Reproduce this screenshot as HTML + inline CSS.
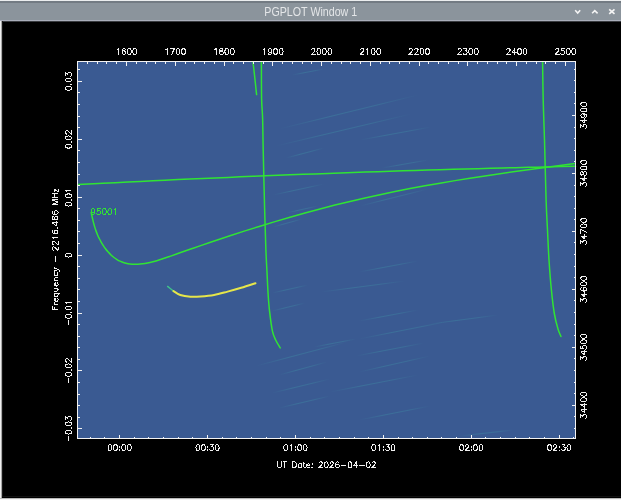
<!DOCTYPE html>
<html><head><meta charset="utf-8"><style>
html,body{margin:0;padding:0;background:#000;width:621px;height:500px;overflow:hidden}
svg{display:block;will-change:transform}
text{font-family:"Liberation Sans",sans-serif}
</style></head><body>
<svg width="621" height="500" viewBox="0 0 621 500" shape-rendering="auto">
<rect x="0" y="0" width="621" height="500" fill="#000"/>
<rect x="0" y="0" width="621" height="1" fill="#eceeef"/>
<rect x="0" y="1" width="621" height="2" fill="#737b83"/>
<rect x="0" y="3" width="621" height="17" fill="#8b949c"/>
<rect x="0" y="20" width="621" height="1" fill="#aaaebb"/>
<rect x="0" y="21" width="621" height="1" fill="#3a3c40"/>
<rect x="2" y="21" width="1" height="476" fill="#161616"/>
<rect x="0" y="496" width="621" height="1" fill="#121212"/>
<rect x="1" y="21" width="1" height="479" fill="#a8a8a8"/>
<rect x="0" y="21" width="1" height="479" fill="#f0f0f0"/>
<rect x="0" y="498" width="621" height="1" fill="#b8b8b8"/>
<rect x="0" y="499" width="621" height="1" fill="#f4f4f4"/>
<text x="310.8" y="15.8" text-anchor="middle" font-size="12" fill="#e4e6e8" transform="translate(310.8 0) scale(0.89 1) translate(-310.8 0)">PGPLOT Window 1</text>
<path d="M575.2 10.3 L577.7 13.1 L580.2 10.3" fill="none" stroke="#f4f4f4" stroke-width="1.6"/>
<path d="M592.1 13.3 L594.8 10.6 L597.6 13.3" fill="none" stroke="#f4f4f4" stroke-width="1.6"/>
<path d="M609.2 9.3 L614.5 13.8 M614.5 9.3 L609.2 13.8" fill="none" stroke="#f4f4f4" stroke-width="1.7"/>
<rect x="77" y="61" width="499" height="378" fill="#3a5a92"/>
<defs><linearGradient id="sg" x1="0" y1="0" x2="1" y2="0"><stop offset="0" stop-color="#3f98a8" stop-opacity="0"/><stop offset="0.35" stop-color="#3f98a8" stop-opacity="0.34"/><stop offset="0.7" stop-color="#3f98a8" stop-opacity="0.3"/><stop offset="1" stop-color="#3f98a8" stop-opacity="0"/></linearGradient></defs>
<line x1="279" y1="129" x2="418" y2="95" stroke="url(#sg)" stroke-width="1.1"/>
<line x1="276" y1="146" x2="411" y2="114" stroke="url(#sg)" stroke-width="1.1"/>
<line x1="360" y1="140" x2="431" y2="127" stroke="url(#sg)" stroke-width="1.1"/>
<line x1="286" y1="158" x2="324" y2="148" stroke="url(#sg)" stroke-width="1.1"/>
<line x1="292" y1="75" x2="324" y2="69" stroke="url(#sg)" stroke-width="1.1"/>
<line x1="273" y1="195" x2="324" y2="184" stroke="url(#sg)" stroke-width="1.1"/>
<line x1="273" y1="227" x2="302" y2="219" stroke="url(#sg)" stroke-width="1.1"/>
<line x1="360" y1="206" x2="428" y2="189" stroke="url(#sg)" stroke-width="1.1"/>
<line x1="382" y1="168" x2="428" y2="160" stroke="url(#sg)" stroke-width="1.1"/>
<line x1="286" y1="213" x2="318" y2="206" stroke="url(#sg)" stroke-width="1.1"/>
<line x1="272" y1="293" x2="308" y2="285" stroke="url(#sg)" stroke-width="1.1"/>
<line x1="272" y1="311" x2="305" y2="303" stroke="url(#sg)" stroke-width="1.1"/>
<line x1="359" y1="272" x2="418" y2="261" stroke="url(#sg)" stroke-width="1.1"/>
<line x1="321" y1="292" x2="405" y2="281" stroke="url(#sg)" stroke-width="1.1"/>
<line x1="359" y1="321" x2="418" y2="310" stroke="url(#sg)" stroke-width="1.1"/>
<line x1="359" y1="339" x2="450" y2="321" stroke="url(#sg)" stroke-width="1.1"/>
<line x1="314" y1="347" x2="356" y2="339" stroke="url(#sg)" stroke-width="1.1"/>
<line x1="256" y1="366" x2="347" y2="342" stroke="url(#sg)" stroke-width="1.1"/>
<line x1="279" y1="375" x2="327" y2="362" stroke="url(#sg)" stroke-width="1.1"/>
<line x1="356" y1="356" x2="424" y2="343" stroke="url(#sg)" stroke-width="1.1"/>
<line x1="359" y1="372" x2="430" y2="356" stroke="url(#sg)" stroke-width="1.1"/>
<line x1="272" y1="393" x2="330" y2="379" stroke="url(#sg)" stroke-width="1.1"/>
<line x1="330" y1="392" x2="418" y2="375" stroke="url(#sg)" stroke-width="1.1"/>
<line x1="279" y1="408" x2="330" y2="396" stroke="url(#sg)" stroke-width="1.1"/>
<line x1="359" y1="420" x2="430" y2="406" stroke="url(#sg)" stroke-width="1.1"/>
<line x1="430" y1="324" x2="498" y2="315" stroke="url(#sg)" stroke-width="1.1"/>
<line x1="460" y1="436" x2="513" y2="430" stroke="url(#sg)" stroke-width="1.1"/>
<path d="M78.00 184.55 C82.17 184.33 94.67 183.68 103.00 183.25 C111.33 182.83 119.67 182.41 128.00 182.00 C136.33 181.59 144.67 181.19 153.00 180.79 C161.33 180.39 169.67 180.00 178.00 179.62 C186.33 179.23 194.67 178.85 203.00 178.48 C211.33 178.11 219.67 177.75 228.00 177.39 C236.33 177.03 244.67 176.68 253.00 176.33 C261.33 175.99 269.67 175.65 278.00 175.32 C286.33 174.99 294.67 174.66 303.00 174.35 C311.33 174.03 319.67 173.72 328.00 173.41 C336.33 173.10 344.67 172.81 353.00 172.51 C361.33 172.22 369.67 171.94 378.00 171.66 C386.33 171.38 394.67 171.11 403.00 170.84 C411.33 170.58 419.67 170.32 428.00 170.07 C436.33 169.81 444.67 169.57 453.00 169.33 C461.33 169.09 469.67 168.86 478.00 168.63 C486.33 168.41 494.67 168.19 503.00 167.97 C511.33 167.76 519.67 167.56 528.00 167.36 C536.33 167.16 545.08 166.96 553.00 166.78 C560.92 166.60 571.75 166.37 575.50 166.29" fill="none" stroke="#30e433" stroke-width="1.5" stroke-linejoin="round" stroke-linecap="round" />
<path d="M91.20 212.40 C91.33 213.05 91.70 214.91 92.00 216.28 C92.30 217.65 92.67 219.27 93.00 220.63 C93.33 222.00 93.67 223.27 94.00 224.48 C94.33 225.69 94.67 226.81 95.00 227.88 C95.33 228.94 95.58 229.73 96.00 230.88 C96.42 232.02 97.00 233.56 97.50 234.75 C98.00 235.94 98.42 236.86 99.00 238.03 C99.58 239.20 100.33 240.60 101.00 241.78 C101.67 242.96 102.25 243.94 103.00 245.10 C103.75 246.26 104.67 247.61 105.50 248.73 C106.33 249.86 107.08 250.81 108.00 251.85 C108.92 252.89 110.00 254.02 111.00 254.97 C112.00 255.91 113.00 256.74 114.00 257.50 C115.00 258.27 116.00 258.94 117.00 259.54 C118.00 260.15 118.83 260.63 120.00 261.16 C121.17 261.68 122.67 262.29 124.00 262.71 C125.33 263.12 126.67 263.43 128.00 263.67 C129.33 263.91 130.67 264.05 132.00 264.14 C133.33 264.23 134.67 264.25 136.00 264.23 C137.33 264.21 138.50 264.16 140.00 264.02 C141.50 263.88 143.33 263.66 145.00 263.40 C146.67 263.13 148.17 262.85 150.00 262.43 C151.83 262.02 154.00 261.47 156.00 260.91 C158.00 260.35 159.67 259.84 162.00 259.08 C164.33 258.33 167.00 257.40 170.00 256.36 C173.00 255.31 176.67 253.99 180.00 252.81 C183.33 251.64 186.67 250.47 190.00 249.30 C193.33 248.14 195.83 247.27 200.00 245.84 C204.17 244.41 210.00 242.42 215.00 240.74 C220.00 239.06 225.00 237.39 230.00 235.75 C235.00 234.11 240.00 232.49 245.00 230.90 C250.00 229.31 255.00 227.73 260.00 226.19 C265.00 224.64 270.00 223.12 275.00 221.62 C280.00 220.13 285.00 218.66 290.00 217.22 C295.00 215.78 300.00 214.37 305.00 212.98 C310.00 211.60 315.00 210.25 320.00 208.93 C325.00 207.61 330.00 206.32 335.00 205.07 C340.00 203.82 345.00 202.59 350.00 201.41 C355.00 200.22 360.00 199.07 365.00 197.94 C370.00 196.82 375.00 195.72 380.00 194.66 C385.00 193.59 390.00 192.56 395.00 191.55 C400.00 190.54 405.00 189.56 410.00 188.61 C415.00 187.65 420.00 186.72 425.00 185.81 C430.00 184.90 435.00 184.02 440.00 183.15 C445.00 182.29 450.00 181.45 455.00 180.62 C460.00 179.80 465.00 179.00 470.00 178.21 C475.00 177.42 480.00 176.65 485.00 175.90 C490.00 175.14 495.00 174.41 500.00 173.68 C505.00 172.95 510.00 172.24 515.00 171.54 C520.00 170.84 525.00 170.16 530.00 169.48 C535.00 168.80 540.00 168.13 545.00 167.47 C550.00 166.80 555.00 166.15 560.00 165.50 C565.00 164.86 572.50 163.90 575.00 163.58" fill="none" stroke="#30e433" stroke-width="1.5" stroke-linejoin="round" stroke-linecap="round" />
<path d="M253.00 62.00 C253.25 64.17 253.90 69.57 254.50 75.00 C255.10 80.43 256.25 91.33 256.60 94.60" fill="none" stroke="#30e433" stroke-width="1.5" stroke-linejoin="round" stroke-linecap="round" />
<path d="M261.40 62.00 C261.43 68.13 261.40 89.47 261.60 98.80 C261.80 108.13 262.33 109.47 262.60 118.00 C262.87 126.53 262.85 134.33 263.20 150.00 C263.55 165.67 264.25 195.33 264.70 212.00 C265.15 228.67 265.52 240.00 265.90 250.00 C266.28 260.00 266.63 264.67 267.00 272.00 C267.37 279.33 267.67 287.40 268.10 294.00 C268.53 300.60 268.87 305.37 269.60 311.60 C270.33 317.83 271.47 326.63 272.50 331.40 C273.53 336.17 274.52 337.45 275.80 340.20 C277.08 342.95 279.47 346.62 280.20 347.90" fill="none" stroke="#30e433" stroke-width="1.5" stroke-linejoin="round" stroke-linecap="round" />
<path d="M542.60 62.00 C542.70 68.33 542.88 87.00 543.20 100.00 C543.52 113.00 544.02 123.33 544.50 140.00 C544.98 156.67 545.60 185.00 546.10 200.00 C546.60 215.00 547.02 220.00 547.50 230.00 C547.98 240.00 548.35 250.00 549.00 260.00 C549.65 270.00 550.50 281.00 551.40 290.00 C552.30 299.00 553.30 307.50 554.40 314.00 C555.50 320.50 556.90 325.25 558.00 329.00 C559.10 332.75 560.50 335.25 561.00 336.50" fill="none" stroke="#30e433" stroke-width="1.5" stroke-linejoin="round" stroke-linecap="round" />
<path d="M167.60 286.40 C168.58 287.18 172.52 290.32 173.50 291.10" fill="none" stroke="#3fc48a" stroke-width="1.4" stroke-linejoin="round" stroke-linecap="round" />
<path d="M173.50 291.10 C174.63 291.75 177.48 294.07 180.30 295.00 C183.12 295.93 187.02 296.45 190.40 296.70 C193.78 296.95 196.65 296.78 200.60 296.50 C204.55 296.22 209.60 295.82 214.10 295.00 C218.60 294.18 223.08 292.80 227.60 291.60 C232.12 290.40 236.55 289.20 241.20 287.80 C245.85 286.40 253.12 283.97 255.50 283.20" fill="none" stroke="#e6e64a" stroke-width="2.0" stroke-linejoin="round" stroke-linecap="round" />
<path transform="translate(90.50 214.50) translate(0.00 0)" d="M4.42 -3.86 L4.14 -3.04 L3.59 -2.48 L2.76 -2.21 L2.48 -2.21 L1.66 -2.48 L1.10 -3.04 L0.83 -3.86 L0.83 -4.14 L1.10 -4.97 L1.66 -5.52 L2.48 -5.80 L2.76 -5.80 L3.59 -5.52 L4.14 -4.97 L4.42 -3.86 L4.42 -2.48 L4.14 -1.10 L3.59 -0.28 L2.76 0.00 L2.21 0.00 L1.38 -0.28 L1.10 -0.83 M9.66 -5.80 L6.90 -5.80 L6.62 -3.31 L6.90 -3.59 L7.73 -3.86 L8.56 -3.86 L9.38 -3.59 L9.94 -3.04 L10.21 -2.21 L10.21 -1.66 L9.94 -0.83 L9.38 -0.28 L8.56 0.00 L7.73 0.00 L6.90 -0.28 L6.62 -0.55 L6.35 -1.10 M13.52 -5.80 L12.70 -5.52 L12.14 -4.69 L11.87 -3.31 L11.87 -2.48 L12.14 -1.10 L12.70 -0.28 L13.52 0.00 L14.08 0.00 L14.90 -0.28 L15.46 -1.10 L15.73 -2.48 L15.73 -3.31 L15.46 -4.69 L14.90 -5.52 L14.08 -5.80 L13.52 -5.80 M19.04 -5.80 L18.22 -5.52 L17.66 -4.69 L17.39 -3.31 L17.39 -2.48 L17.66 -1.10 L18.22 -0.28 L19.04 0.00 L19.60 0.00 L20.42 -0.28 L20.98 -1.10 L21.25 -2.48 L21.25 -3.31 L20.98 -4.69 L20.42 -5.52 L19.60 -5.80 L19.04 -5.80 M23.74 -4.69 L24.29 -4.97 L25.12 -5.80 L25.12 0.00" fill="none" stroke="#30e433" stroke-width="1.0" stroke-linecap="round" stroke-linejoin="round" shape-rendering="crispEdges"/>
<rect x="77.5" y="61.5" width="498" height="377" fill="none" stroke="#f2f2f2" stroke-width="1"/>
<path transform="translate(126.50 54.40) translate(-11.04 0)" d="M1.66 -4.69 L2.21 -4.97 L3.04 -5.80 L3.04 0.00 M9.94 -4.97 L9.66 -5.52 L8.83 -5.80 L8.28 -5.80 L7.45 -5.52 L6.90 -4.69 L6.62 -3.31 L6.62 -1.93 L6.90 -0.83 L7.45 -0.28 L8.28 0.00 L8.56 0.00 L9.38 -0.28 L9.94 -0.83 L10.21 -1.66 L10.21 -1.93 L9.94 -2.76 L9.38 -3.31 L8.56 -3.59 L8.28 -3.59 L7.45 -3.31 L6.90 -2.76 L6.62 -1.93 M13.52 -5.80 L12.70 -5.52 L12.14 -4.69 L11.87 -3.31 L11.87 -2.48 L12.14 -1.10 L12.70 -0.28 L13.52 0.00 L14.08 0.00 L14.90 -0.28 L15.46 -1.10 L15.73 -2.48 L15.73 -3.31 L15.46 -4.69 L14.90 -5.52 L14.08 -5.80 L13.52 -5.80 M19.04 -5.80 L18.22 -5.52 L17.66 -4.69 L17.39 -3.31 L17.39 -2.48 L17.66 -1.10 L18.22 -0.28 L19.04 0.00 L19.60 0.00 L20.42 -0.28 L20.98 -1.10 L21.25 -2.48 L21.25 -3.31 L20.98 -4.69 L20.42 -5.52 L19.60 -5.80 L19.04 -5.80" fill="none" stroke="#f0f0f0" stroke-width="1.0" stroke-linecap="round" stroke-linejoin="round" shape-rendering="crispEdges"/>
<path transform="translate(175.28 54.40) translate(-11.04 0)" d="M1.66 -4.69 L2.21 -4.97 L3.04 -5.80 L3.04 0.00 M10.21 -5.80 L7.45 0.00 M6.35 -5.80 L10.21 -5.80 M13.52 -5.80 L12.70 -5.52 L12.14 -4.69 L11.87 -3.31 L11.87 -2.48 L12.14 -1.10 L12.70 -0.28 L13.52 0.00 L14.08 0.00 L14.90 -0.28 L15.46 -1.10 L15.73 -2.48 L15.73 -3.31 L15.46 -4.69 L14.90 -5.52 L14.08 -5.80 L13.52 -5.80 M19.04 -5.80 L18.22 -5.52 L17.66 -4.69 L17.39 -3.31 L17.39 -2.48 L17.66 -1.10 L18.22 -0.28 L19.04 0.00 L19.60 0.00 L20.42 -0.28 L20.98 -1.10 L21.25 -2.48 L21.25 -3.31 L20.98 -4.69 L20.42 -5.52 L19.60 -5.80 L19.04 -5.80" fill="none" stroke="#f0f0f0" stroke-width="1.0" stroke-linecap="round" stroke-linejoin="round" shape-rendering="crispEdges"/>
<path transform="translate(224.06 54.40) translate(-11.04 0)" d="M1.66 -4.69 L2.21 -4.97 L3.04 -5.80 L3.04 0.00 M7.73 -5.80 L6.90 -5.52 L6.62 -4.97 L6.62 -4.42 L6.90 -3.86 L7.45 -3.59 L8.56 -3.31 L9.38 -3.04 L9.94 -2.48 L10.21 -1.93 L10.21 -1.10 L9.94 -0.55 L9.66 -0.28 L8.83 0.00 L7.73 0.00 L6.90 -0.28 L6.62 -0.55 L6.35 -1.10 L6.35 -1.93 L6.62 -2.48 L7.18 -3.04 L8.00 -3.31 L9.11 -3.59 L9.66 -3.86 L9.94 -4.42 L9.94 -4.97 L9.66 -5.52 L8.83 -5.80 L7.73 -5.80 M13.52 -5.80 L12.70 -5.52 L12.14 -4.69 L11.87 -3.31 L11.87 -2.48 L12.14 -1.10 L12.70 -0.28 L13.52 0.00 L14.08 0.00 L14.90 -0.28 L15.46 -1.10 L15.73 -2.48 L15.73 -3.31 L15.46 -4.69 L14.90 -5.52 L14.08 -5.80 L13.52 -5.80 M19.04 -5.80 L18.22 -5.52 L17.66 -4.69 L17.39 -3.31 L17.39 -2.48 L17.66 -1.10 L18.22 -0.28 L19.04 0.00 L19.60 0.00 L20.42 -0.28 L20.98 -1.10 L21.25 -2.48 L21.25 -3.31 L20.98 -4.69 L20.42 -5.52 L19.60 -5.80 L19.04 -5.80" fill="none" stroke="#f0f0f0" stroke-width="1.0" stroke-linecap="round" stroke-linejoin="round" shape-rendering="crispEdges"/>
<path transform="translate(272.83 54.40) translate(-11.04 0)" d="M1.66 -4.69 L2.21 -4.97 L3.04 -5.80 L3.04 0.00 M9.94 -3.86 L9.66 -3.04 L9.11 -2.48 L8.28 -2.21 L8.00 -2.21 L7.18 -2.48 L6.62 -3.04 L6.35 -3.86 L6.35 -4.14 L6.62 -4.97 L7.18 -5.52 L8.00 -5.80 L8.28 -5.80 L9.11 -5.52 L9.66 -4.97 L9.94 -3.86 L9.94 -2.48 L9.66 -1.10 L9.11 -0.28 L8.28 0.00 L7.73 0.00 L6.90 -0.28 L6.62 -0.83 M13.52 -5.80 L12.70 -5.52 L12.14 -4.69 L11.87 -3.31 L11.87 -2.48 L12.14 -1.10 L12.70 -0.28 L13.52 0.00 L14.08 0.00 L14.90 -0.28 L15.46 -1.10 L15.73 -2.48 L15.73 -3.31 L15.46 -4.69 L14.90 -5.52 L14.08 -5.80 L13.52 -5.80 M19.04 -5.80 L18.22 -5.52 L17.66 -4.69 L17.39 -3.31 L17.39 -2.48 L17.66 -1.10 L18.22 -0.28 L19.04 0.00 L19.60 0.00 L20.42 -0.28 L20.98 -1.10 L21.25 -2.48 L21.25 -3.31 L20.98 -4.69 L20.42 -5.52 L19.60 -5.80 L19.04 -5.80" fill="none" stroke="#f0f0f0" stroke-width="1.0" stroke-linecap="round" stroke-linejoin="round" shape-rendering="crispEdges"/>
<path transform="translate(321.61 54.40) translate(-11.04 0)" d="M1.10 -4.42 L1.10 -4.69 L1.38 -5.24 L1.66 -5.52 L2.21 -5.80 L3.31 -5.80 L3.86 -5.52 L4.14 -5.24 L4.42 -4.69 L4.42 -4.14 L4.14 -3.59 L3.59 -2.76 L0.83 0.00 L4.69 0.00 M8.00 -5.80 L7.18 -5.52 L6.62 -4.69 L6.35 -3.31 L6.35 -2.48 L6.62 -1.10 L7.18 -0.28 L8.00 0.00 L8.56 0.00 L9.38 -0.28 L9.94 -1.10 L10.21 -2.48 L10.21 -3.31 L9.94 -4.69 L9.38 -5.52 L8.56 -5.80 L8.00 -5.80 M13.52 -5.80 L12.70 -5.52 L12.14 -4.69 L11.87 -3.31 L11.87 -2.48 L12.14 -1.10 L12.70 -0.28 L13.52 0.00 L14.08 0.00 L14.90 -0.28 L15.46 -1.10 L15.73 -2.48 L15.73 -3.31 L15.46 -4.69 L14.90 -5.52 L14.08 -5.80 L13.52 -5.80 M19.04 -5.80 L18.22 -5.52 L17.66 -4.69 L17.39 -3.31 L17.39 -2.48 L17.66 -1.10 L18.22 -0.28 L19.04 0.00 L19.60 0.00 L20.42 -0.28 L20.98 -1.10 L21.25 -2.48 L21.25 -3.31 L20.98 -4.69 L20.42 -5.52 L19.60 -5.80 L19.04 -5.80" fill="none" stroke="#f0f0f0" stroke-width="1.0" stroke-linecap="round" stroke-linejoin="round" shape-rendering="crispEdges"/>
<path transform="translate(370.39 54.40) translate(-11.04 0)" d="M1.10 -4.42 L1.10 -4.69 L1.38 -5.24 L1.66 -5.52 L2.21 -5.80 L3.31 -5.80 L3.86 -5.52 L4.14 -5.24 L4.42 -4.69 L4.42 -4.14 L4.14 -3.59 L3.59 -2.76 L0.83 0.00 L4.69 0.00 M7.18 -4.69 L7.73 -4.97 L8.56 -5.80 L8.56 0.00 M13.52 -5.80 L12.70 -5.52 L12.14 -4.69 L11.87 -3.31 L11.87 -2.48 L12.14 -1.10 L12.70 -0.28 L13.52 0.00 L14.08 0.00 L14.90 -0.28 L15.46 -1.10 L15.73 -2.48 L15.73 -3.31 L15.46 -4.69 L14.90 -5.52 L14.08 -5.80 L13.52 -5.80 M19.04 -5.80 L18.22 -5.52 L17.66 -4.69 L17.39 -3.31 L17.39 -2.48 L17.66 -1.10 L18.22 -0.28 L19.04 0.00 L19.60 0.00 L20.42 -0.28 L20.98 -1.10 L21.25 -2.48 L21.25 -3.31 L20.98 -4.69 L20.42 -5.52 L19.60 -5.80 L19.04 -5.80" fill="none" stroke="#f0f0f0" stroke-width="1.0" stroke-linecap="round" stroke-linejoin="round" shape-rendering="crispEdges"/>
<path transform="translate(419.17 54.40) translate(-11.04 0)" d="M1.10 -4.42 L1.10 -4.69 L1.38 -5.24 L1.66 -5.52 L2.21 -5.80 L3.31 -5.80 L3.86 -5.52 L4.14 -5.24 L4.42 -4.69 L4.42 -4.14 L4.14 -3.59 L3.59 -2.76 L0.83 0.00 L4.69 0.00 M6.62 -4.42 L6.62 -4.69 L6.90 -5.24 L7.18 -5.52 L7.73 -5.80 L8.83 -5.80 L9.38 -5.52 L9.66 -5.24 L9.94 -4.69 L9.94 -4.14 L9.66 -3.59 L9.11 -2.76 L6.35 0.00 L10.21 0.00 M13.52 -5.80 L12.70 -5.52 L12.14 -4.69 L11.87 -3.31 L11.87 -2.48 L12.14 -1.10 L12.70 -0.28 L13.52 0.00 L14.08 0.00 L14.90 -0.28 L15.46 -1.10 L15.73 -2.48 L15.73 -3.31 L15.46 -4.69 L14.90 -5.52 L14.08 -5.80 L13.52 -5.80 M19.04 -5.80 L18.22 -5.52 L17.66 -4.69 L17.39 -3.31 L17.39 -2.48 L17.66 -1.10 L18.22 -0.28 L19.04 0.00 L19.60 0.00 L20.42 -0.28 L20.98 -1.10 L21.25 -2.48 L21.25 -3.31 L20.98 -4.69 L20.42 -5.52 L19.60 -5.80 L19.04 -5.80" fill="none" stroke="#f0f0f0" stroke-width="1.0" stroke-linecap="round" stroke-linejoin="round" shape-rendering="crispEdges"/>
<path transform="translate(467.95 54.40) translate(-11.04 0)" d="M1.10 -4.42 L1.10 -4.69 L1.38 -5.24 L1.66 -5.52 L2.21 -5.80 L3.31 -5.80 L3.86 -5.52 L4.14 -5.24 L4.42 -4.69 L4.42 -4.14 L4.14 -3.59 L3.59 -2.76 L0.83 0.00 L4.69 0.00 M6.90 -5.80 L9.94 -5.80 L8.28 -3.59 L9.11 -3.59 L9.66 -3.31 L9.94 -3.04 L10.21 -2.21 L10.21 -1.66 L9.94 -0.83 L9.38 -0.28 L8.56 0.00 L7.73 0.00 L6.90 -0.28 L6.62 -0.55 L6.35 -1.10 M13.52 -5.80 L12.70 -5.52 L12.14 -4.69 L11.87 -3.31 L11.87 -2.48 L12.14 -1.10 L12.70 -0.28 L13.52 0.00 L14.08 0.00 L14.90 -0.28 L15.46 -1.10 L15.73 -2.48 L15.73 -3.31 L15.46 -4.69 L14.90 -5.52 L14.08 -5.80 L13.52 -5.80 M19.04 -5.80 L18.22 -5.52 L17.66 -4.69 L17.39 -3.31 L17.39 -2.48 L17.66 -1.10 L18.22 -0.28 L19.04 0.00 L19.60 0.00 L20.42 -0.28 L20.98 -1.10 L21.25 -2.48 L21.25 -3.31 L20.98 -4.69 L20.42 -5.52 L19.60 -5.80 L19.04 -5.80" fill="none" stroke="#f0f0f0" stroke-width="1.0" stroke-linecap="round" stroke-linejoin="round" shape-rendering="crispEdges"/>
<path transform="translate(516.72 54.40) translate(-11.04 0)" d="M1.10 -4.42 L1.10 -4.69 L1.38 -5.24 L1.66 -5.52 L2.21 -5.80 L3.31 -5.80 L3.86 -5.52 L4.14 -5.24 L4.42 -4.69 L4.42 -4.14 L4.14 -3.59 L3.59 -2.76 L0.83 0.00 L4.69 0.00 M9.11 -5.80 L6.35 -1.93 L10.49 -1.93 M9.11 -5.80 L9.11 0.00 M13.52 -5.80 L12.70 -5.52 L12.14 -4.69 L11.87 -3.31 L11.87 -2.48 L12.14 -1.10 L12.70 -0.28 L13.52 0.00 L14.08 0.00 L14.90 -0.28 L15.46 -1.10 L15.73 -2.48 L15.73 -3.31 L15.46 -4.69 L14.90 -5.52 L14.08 -5.80 L13.52 -5.80 M19.04 -5.80 L18.22 -5.52 L17.66 -4.69 L17.39 -3.31 L17.39 -2.48 L17.66 -1.10 L18.22 -0.28 L19.04 0.00 L19.60 0.00 L20.42 -0.28 L20.98 -1.10 L21.25 -2.48 L21.25 -3.31 L20.98 -4.69 L20.42 -5.52 L19.60 -5.80 L19.04 -5.80" fill="none" stroke="#f0f0f0" stroke-width="1.0" stroke-linecap="round" stroke-linejoin="round" shape-rendering="crispEdges"/>
<path transform="translate(565.50 54.40) translate(-11.04 0)" d="M1.10 -4.42 L1.10 -4.69 L1.38 -5.24 L1.66 -5.52 L2.21 -5.80 L3.31 -5.80 L3.86 -5.52 L4.14 -5.24 L4.42 -4.69 L4.42 -4.14 L4.14 -3.59 L3.59 -2.76 L0.83 0.00 L4.69 0.00 M9.66 -5.80 L6.90 -5.80 L6.62 -3.31 L6.90 -3.59 L7.73 -3.86 L8.56 -3.86 L9.38 -3.59 L9.94 -3.04 L10.21 -2.21 L10.21 -1.66 L9.94 -0.83 L9.38 -0.28 L8.56 0.00 L7.73 0.00 L6.90 -0.28 L6.62 -0.55 L6.35 -1.10 M13.52 -5.80 L12.70 -5.52 L12.14 -4.69 L11.87 -3.31 L11.87 -2.48 L12.14 -1.10 L12.70 -0.28 L13.52 0.00 L14.08 0.00 L14.90 -0.28 L15.46 -1.10 L15.73 -2.48 L15.73 -3.31 L15.46 -4.69 L14.90 -5.52 L14.08 -5.80 L13.52 -5.80 M19.04 -5.80 L18.22 -5.52 L17.66 -4.69 L17.39 -3.31 L17.39 -2.48 L17.66 -1.10 L18.22 -0.28 L19.04 0.00 L19.60 0.00 L20.42 -0.28 L20.98 -1.10 L21.25 -2.48 L21.25 -3.31 L20.98 -4.69 L20.42 -5.52 L19.60 -5.80 L19.04 -5.80" fill="none" stroke="#f0f0f0" stroke-width="1.0" stroke-linecap="round" stroke-linejoin="round" shape-rendering="crispEdges"/>
<path transform="translate(119.60 450.50) translate(-12.42 0)" d="M2.48 -5.80 L1.66 -5.52 L1.10 -4.69 L0.83 -3.31 L0.83 -2.48 L1.10 -1.10 L1.66 -0.28 L2.48 0.00 L3.04 0.00 L3.86 -0.28 L4.42 -1.10 L4.69 -2.48 L4.69 -3.31 L4.42 -4.69 L3.86 -5.52 L3.04 -5.80 L2.48 -5.80 M8.00 -5.80 L7.18 -5.52 L6.62 -4.69 L6.35 -3.31 L6.35 -2.48 L6.62 -1.10 L7.18 -0.28 L8.00 0.00 L8.56 0.00 L9.38 -0.28 L9.94 -1.10 L10.21 -2.48 L10.21 -3.31 L9.94 -4.69 L9.38 -5.52 L8.56 -5.80 L8.00 -5.80 M12.42 -3.86 L12.14 -3.59 L12.42 -3.31 L12.70 -3.59 L12.42 -3.86 M12.42 -0.55 L12.14 -0.28 L12.42 0.00 L12.70 -0.28 L12.42 -0.55 M16.28 -5.80 L15.46 -5.52 L14.90 -4.69 L14.63 -3.31 L14.63 -2.48 L14.90 -1.10 L15.46 -0.28 L16.28 0.00 L16.84 0.00 L17.66 -0.28 L18.22 -1.10 L18.49 -2.48 L18.49 -3.31 L18.22 -4.69 L17.66 -5.52 L16.84 -5.80 L16.28 -5.80 M21.80 -5.80 L20.98 -5.52 L20.42 -4.69 L20.15 -3.31 L20.15 -2.48 L20.42 -1.10 L20.98 -0.28 L21.80 0.00 L22.36 0.00 L23.18 -0.28 L23.74 -1.10 L24.01 -2.48 L24.01 -3.31 L23.74 -4.69 L23.18 -5.52 L22.36 -5.80 L21.80 -5.80" fill="none" stroke="#f0f0f0" stroke-width="1.0" stroke-linecap="round" stroke-linejoin="round" shape-rendering="crispEdges"/>
<path transform="translate(207.52 450.50) translate(-12.42 0)" d="M2.48 -5.80 L1.66 -5.52 L1.10 -4.69 L0.83 -3.31 L0.83 -2.48 L1.10 -1.10 L1.66 -0.28 L2.48 0.00 L3.04 0.00 L3.86 -0.28 L4.42 -1.10 L4.69 -2.48 L4.69 -3.31 L4.42 -4.69 L3.86 -5.52 L3.04 -5.80 L2.48 -5.80 M8.00 -5.80 L7.18 -5.52 L6.62 -4.69 L6.35 -3.31 L6.35 -2.48 L6.62 -1.10 L7.18 -0.28 L8.00 0.00 L8.56 0.00 L9.38 -0.28 L9.94 -1.10 L10.21 -2.48 L10.21 -3.31 L9.94 -4.69 L9.38 -5.52 L8.56 -5.80 L8.00 -5.80 M12.42 -3.86 L12.14 -3.59 L12.42 -3.31 L12.70 -3.59 L12.42 -3.86 M12.42 -0.55 L12.14 -0.28 L12.42 0.00 L12.70 -0.28 L12.42 -0.55 M15.18 -5.80 L18.22 -5.80 L16.56 -3.59 L17.39 -3.59 L17.94 -3.31 L18.22 -3.04 L18.49 -2.21 L18.49 -1.66 L18.22 -0.83 L17.66 -0.28 L16.84 0.00 L16.01 0.00 L15.18 -0.28 L14.90 -0.55 L14.63 -1.10 M21.80 -5.80 L20.98 -5.52 L20.42 -4.69 L20.15 -3.31 L20.15 -2.48 L20.42 -1.10 L20.98 -0.28 L21.80 0.00 L22.36 0.00 L23.18 -0.28 L23.74 -1.10 L24.01 -2.48 L24.01 -3.31 L23.74 -4.69 L23.18 -5.52 L22.36 -5.80 L21.80 -5.80" fill="none" stroke="#f0f0f0" stroke-width="1.0" stroke-linecap="round" stroke-linejoin="round" shape-rendering="crispEdges"/>
<path transform="translate(295.44 450.50) translate(-12.42 0)" d="M2.48 -5.80 L1.66 -5.52 L1.10 -4.69 L0.83 -3.31 L0.83 -2.48 L1.10 -1.10 L1.66 -0.28 L2.48 0.00 L3.04 0.00 L3.86 -0.28 L4.42 -1.10 L4.69 -2.48 L4.69 -3.31 L4.42 -4.69 L3.86 -5.52 L3.04 -5.80 L2.48 -5.80 M7.18 -4.69 L7.73 -4.97 L8.56 -5.80 L8.56 0.00 M12.42 -3.86 L12.14 -3.59 L12.42 -3.31 L12.70 -3.59 L12.42 -3.86 M12.42 -0.55 L12.14 -0.28 L12.42 0.00 L12.70 -0.28 L12.42 -0.55 M16.28 -5.80 L15.46 -5.52 L14.90 -4.69 L14.63 -3.31 L14.63 -2.48 L14.90 -1.10 L15.46 -0.28 L16.28 0.00 L16.84 0.00 L17.66 -0.28 L18.22 -1.10 L18.49 -2.48 L18.49 -3.31 L18.22 -4.69 L17.66 -5.52 L16.84 -5.80 L16.28 -5.80 M21.80 -5.80 L20.98 -5.52 L20.42 -4.69 L20.15 -3.31 L20.15 -2.48 L20.42 -1.10 L20.98 -0.28 L21.80 0.00 L22.36 0.00 L23.18 -0.28 L23.74 -1.10 L24.01 -2.48 L24.01 -3.31 L23.74 -4.69 L23.18 -5.52 L22.36 -5.80 L21.80 -5.80" fill="none" stroke="#f0f0f0" stroke-width="1.0" stroke-linecap="round" stroke-linejoin="round" shape-rendering="crispEdges"/>
<path transform="translate(383.36 450.50) translate(-12.42 0)" d="M2.48 -5.80 L1.66 -5.52 L1.10 -4.69 L0.83 -3.31 L0.83 -2.48 L1.10 -1.10 L1.66 -0.28 L2.48 0.00 L3.04 0.00 L3.86 -0.28 L4.42 -1.10 L4.69 -2.48 L4.69 -3.31 L4.42 -4.69 L3.86 -5.52 L3.04 -5.80 L2.48 -5.80 M7.18 -4.69 L7.73 -4.97 L8.56 -5.80 L8.56 0.00 M12.42 -3.86 L12.14 -3.59 L12.42 -3.31 L12.70 -3.59 L12.42 -3.86 M12.42 -0.55 L12.14 -0.28 L12.42 0.00 L12.70 -0.28 L12.42 -0.55 M15.18 -5.80 L18.22 -5.80 L16.56 -3.59 L17.39 -3.59 L17.94 -3.31 L18.22 -3.04 L18.49 -2.21 L18.49 -1.66 L18.22 -0.83 L17.66 -0.28 L16.84 0.00 L16.01 0.00 L15.18 -0.28 L14.90 -0.55 L14.63 -1.10 M21.80 -5.80 L20.98 -5.52 L20.42 -4.69 L20.15 -3.31 L20.15 -2.48 L20.42 -1.10 L20.98 -0.28 L21.80 0.00 L22.36 0.00 L23.18 -0.28 L23.74 -1.10 L24.01 -2.48 L24.01 -3.31 L23.74 -4.69 L23.18 -5.52 L22.36 -5.80 L21.80 -5.80" fill="none" stroke="#f0f0f0" stroke-width="1.0" stroke-linecap="round" stroke-linejoin="round" shape-rendering="crispEdges"/>
<path transform="translate(471.28 450.50) translate(-12.42 0)" d="M2.48 -5.80 L1.66 -5.52 L1.10 -4.69 L0.83 -3.31 L0.83 -2.48 L1.10 -1.10 L1.66 -0.28 L2.48 0.00 L3.04 0.00 L3.86 -0.28 L4.42 -1.10 L4.69 -2.48 L4.69 -3.31 L4.42 -4.69 L3.86 -5.52 L3.04 -5.80 L2.48 -5.80 M6.62 -4.42 L6.62 -4.69 L6.90 -5.24 L7.18 -5.52 L7.73 -5.80 L8.83 -5.80 L9.38 -5.52 L9.66 -5.24 L9.94 -4.69 L9.94 -4.14 L9.66 -3.59 L9.11 -2.76 L6.35 0.00 L10.21 0.00 M12.42 -3.86 L12.14 -3.59 L12.42 -3.31 L12.70 -3.59 L12.42 -3.86 M12.42 -0.55 L12.14 -0.28 L12.42 0.00 L12.70 -0.28 L12.42 -0.55 M16.28 -5.80 L15.46 -5.52 L14.90 -4.69 L14.63 -3.31 L14.63 -2.48 L14.90 -1.10 L15.46 -0.28 L16.28 0.00 L16.84 0.00 L17.66 -0.28 L18.22 -1.10 L18.49 -2.48 L18.49 -3.31 L18.22 -4.69 L17.66 -5.52 L16.84 -5.80 L16.28 -5.80 M21.80 -5.80 L20.98 -5.52 L20.42 -4.69 L20.15 -3.31 L20.15 -2.48 L20.42 -1.10 L20.98 -0.28 L21.80 0.00 L22.36 0.00 L23.18 -0.28 L23.74 -1.10 L24.01 -2.48 L24.01 -3.31 L23.74 -4.69 L23.18 -5.52 L22.36 -5.80 L21.80 -5.80" fill="none" stroke="#f0f0f0" stroke-width="1.0" stroke-linecap="round" stroke-linejoin="round" shape-rendering="crispEdges"/>
<path transform="translate(559.20 450.50) translate(-12.42 0)" d="M2.48 -5.80 L1.66 -5.52 L1.10 -4.69 L0.83 -3.31 L0.83 -2.48 L1.10 -1.10 L1.66 -0.28 L2.48 0.00 L3.04 0.00 L3.86 -0.28 L4.42 -1.10 L4.69 -2.48 L4.69 -3.31 L4.42 -4.69 L3.86 -5.52 L3.04 -5.80 L2.48 -5.80 M6.62 -4.42 L6.62 -4.69 L6.90 -5.24 L7.18 -5.52 L7.73 -5.80 L8.83 -5.80 L9.38 -5.52 L9.66 -5.24 L9.94 -4.69 L9.94 -4.14 L9.66 -3.59 L9.11 -2.76 L6.35 0.00 L10.21 0.00 M12.42 -3.86 L12.14 -3.59 L12.42 -3.31 L12.70 -3.59 L12.42 -3.86 M12.42 -0.55 L12.14 -0.28 L12.42 0.00 L12.70 -0.28 L12.42 -0.55 M15.18 -5.80 L18.22 -5.80 L16.56 -3.59 L17.39 -3.59 L17.94 -3.31 L18.22 -3.04 L18.49 -2.21 L18.49 -1.66 L18.22 -0.83 L17.66 -0.28 L16.84 0.00 L16.01 0.00 L15.18 -0.28 L14.90 -0.55 L14.63 -1.10 M21.80 -5.80 L20.98 -5.52 L20.42 -4.69 L20.15 -3.31 L20.15 -2.48 L20.42 -1.10 L20.98 -0.28 L21.80 0.00 L22.36 0.00 L23.18 -0.28 L23.74 -1.10 L24.01 -2.48 L24.01 -3.31 L23.74 -4.69 L23.18 -5.52 L22.36 -5.80 L21.80 -5.80" fill="none" stroke="#f0f0f0" stroke-width="1.0" stroke-linecap="round" stroke-linejoin="round" shape-rendering="crispEdges"/>
<path transform="translate(71.40 428.80) rotate(-90) translate(-13.25 0)" d="M1.10 -2.48 L6.07 -2.48 M9.66 -5.80 L8.83 -5.52 L8.28 -4.69 L8.00 -3.31 L8.00 -2.48 L8.28 -1.10 L8.83 -0.28 L9.66 0.00 L10.21 0.00 L11.04 -0.28 L11.59 -1.10 L11.87 -2.48 L11.87 -3.31 L11.59 -4.69 L11.04 -5.52 L10.21 -5.80 L9.66 -5.80 M14.08 -0.55 L13.80 -0.28 L14.08 0.00 L14.35 -0.28 L14.08 -0.55 M17.94 -5.80 L17.11 -5.52 L16.56 -4.69 L16.28 -3.31 L16.28 -2.48 L16.56 -1.10 L17.11 -0.28 L17.94 0.00 L18.49 0.00 L19.32 -0.28 L19.87 -1.10 L20.15 -2.48 L20.15 -3.31 L19.87 -4.69 L19.32 -5.52 L18.49 -5.80 L17.94 -5.80 M22.36 -5.80 L25.39 -5.80 L23.74 -3.59 L24.56 -3.59 L25.12 -3.31 L25.39 -3.04 L25.67 -2.21 L25.67 -1.66 L25.39 -0.83 L24.84 -0.28 L24.01 0.00 L23.18 0.00 L22.36 -0.28 L22.08 -0.55 L21.80 -1.10" fill="none" stroke="#f0f0f0" stroke-width="1.0" stroke-linecap="round" stroke-linejoin="round" shape-rendering="crispEdges"/>
<path transform="translate(71.40 370.90) rotate(-90) translate(-13.25 0)" d="M1.10 -2.48 L6.07 -2.48 M9.66 -5.80 L8.83 -5.52 L8.28 -4.69 L8.00 -3.31 L8.00 -2.48 L8.28 -1.10 L8.83 -0.28 L9.66 0.00 L10.21 0.00 L11.04 -0.28 L11.59 -1.10 L11.87 -2.48 L11.87 -3.31 L11.59 -4.69 L11.04 -5.52 L10.21 -5.80 L9.66 -5.80 M14.08 -0.55 L13.80 -0.28 L14.08 0.00 L14.35 -0.28 L14.08 -0.55 M17.94 -5.80 L17.11 -5.52 L16.56 -4.69 L16.28 -3.31 L16.28 -2.48 L16.56 -1.10 L17.11 -0.28 L17.94 0.00 L18.49 0.00 L19.32 -0.28 L19.87 -1.10 L20.15 -2.48 L20.15 -3.31 L19.87 -4.69 L19.32 -5.52 L18.49 -5.80 L17.94 -5.80 M22.08 -4.42 L22.08 -4.69 L22.36 -5.24 L22.63 -5.52 L23.18 -5.80 L24.29 -5.80 L24.84 -5.52 L25.12 -5.24 L25.39 -4.69 L25.39 -4.14 L25.12 -3.59 L24.56 -2.76 L21.80 0.00 L25.67 0.00" fill="none" stroke="#f0f0f0" stroke-width="1.0" stroke-linecap="round" stroke-linejoin="round" shape-rendering="crispEdges"/>
<path transform="translate(71.40 313.00) rotate(-90) translate(-13.25 0)" d="M1.10 -2.48 L6.07 -2.48 M9.66 -5.80 L8.83 -5.52 L8.28 -4.69 L8.00 -3.31 L8.00 -2.48 L8.28 -1.10 L8.83 -0.28 L9.66 0.00 L10.21 0.00 L11.04 -0.28 L11.59 -1.10 L11.87 -2.48 L11.87 -3.31 L11.59 -4.69 L11.04 -5.52 L10.21 -5.80 L9.66 -5.80 M14.08 -0.55 L13.80 -0.28 L14.08 0.00 L14.35 -0.28 L14.08 -0.55 M17.94 -5.80 L17.11 -5.52 L16.56 -4.69 L16.28 -3.31 L16.28 -2.48 L16.56 -1.10 L17.11 -0.28 L17.94 0.00 L18.49 0.00 L19.32 -0.28 L19.87 -1.10 L20.15 -2.48 L20.15 -3.31 L19.87 -4.69 L19.32 -5.52 L18.49 -5.80 L17.94 -5.80 M22.63 -4.69 L23.18 -4.97 L24.01 -5.80 L24.01 0.00" fill="none" stroke="#f0f0f0" stroke-width="1.0" stroke-linecap="round" stroke-linejoin="round" shape-rendering="crispEdges"/>
<path transform="translate(71.40 255.10) rotate(-90) translate(-2.76 0)" d="M2.48 -5.80 L1.66 -5.52 L1.10 -4.69 L0.83 -3.31 L0.83 -2.48 L1.10 -1.10 L1.66 -0.28 L2.48 0.00 L3.04 0.00 L3.86 -0.28 L4.42 -1.10 L4.69 -2.48 L4.69 -3.31 L4.42 -4.69 L3.86 -5.52 L3.04 -5.80 L2.48 -5.80" fill="none" stroke="#f0f0f0" stroke-width="1.0" stroke-linecap="round" stroke-linejoin="round" shape-rendering="crispEdges"/>
<path transform="translate(71.40 197.20) rotate(-90) translate(-9.66 0)" d="M2.48 -5.80 L1.66 -5.52 L1.10 -4.69 L0.83 -3.31 L0.83 -2.48 L1.10 -1.10 L1.66 -0.28 L2.48 0.00 L3.04 0.00 L3.86 -0.28 L4.42 -1.10 L4.69 -2.48 L4.69 -3.31 L4.42 -4.69 L3.86 -5.52 L3.04 -5.80 L2.48 -5.80 M6.90 -0.55 L6.62 -0.28 L6.90 0.00 L7.18 -0.28 L6.90 -0.55 M10.76 -5.80 L9.94 -5.52 L9.38 -4.69 L9.11 -3.31 L9.11 -2.48 L9.38 -1.10 L9.94 -0.28 L10.76 0.00 L11.32 0.00 L12.14 -0.28 L12.70 -1.10 L12.97 -2.48 L12.97 -3.31 L12.70 -4.69 L12.14 -5.52 L11.32 -5.80 L10.76 -5.80 M15.46 -4.69 L16.01 -4.97 L16.84 -5.80 L16.84 0.00" fill="none" stroke="#f0f0f0" stroke-width="1.0" stroke-linecap="round" stroke-linejoin="round" shape-rendering="crispEdges"/>
<path transform="translate(71.40 139.30) rotate(-90) translate(-9.66 0)" d="M2.48 -5.80 L1.66 -5.52 L1.10 -4.69 L0.83 -3.31 L0.83 -2.48 L1.10 -1.10 L1.66 -0.28 L2.48 0.00 L3.04 0.00 L3.86 -0.28 L4.42 -1.10 L4.69 -2.48 L4.69 -3.31 L4.42 -4.69 L3.86 -5.52 L3.04 -5.80 L2.48 -5.80 M6.90 -0.55 L6.62 -0.28 L6.90 0.00 L7.18 -0.28 L6.90 -0.55 M10.76 -5.80 L9.94 -5.52 L9.38 -4.69 L9.11 -3.31 L9.11 -2.48 L9.38 -1.10 L9.94 -0.28 L10.76 0.00 L11.32 0.00 L12.14 -0.28 L12.70 -1.10 L12.97 -2.48 L12.97 -3.31 L12.70 -4.69 L12.14 -5.52 L11.32 -5.80 L10.76 -5.80 M14.90 -4.42 L14.90 -4.69 L15.18 -5.24 L15.46 -5.52 L16.01 -5.80 L17.11 -5.80 L17.66 -5.52 L17.94 -5.24 L18.22 -4.69 L18.22 -4.14 L17.94 -3.59 L17.39 -2.76 L14.63 0.00 L18.49 0.00" fill="none" stroke="#f0f0f0" stroke-width="1.0" stroke-linecap="round" stroke-linejoin="round" shape-rendering="crispEdges"/>
<path transform="translate(71.40 81.40) rotate(-90) translate(-9.66 0)" d="M2.48 -5.80 L1.66 -5.52 L1.10 -4.69 L0.83 -3.31 L0.83 -2.48 L1.10 -1.10 L1.66 -0.28 L2.48 0.00 L3.04 0.00 L3.86 -0.28 L4.42 -1.10 L4.69 -2.48 L4.69 -3.31 L4.42 -4.69 L3.86 -5.52 L3.04 -5.80 L2.48 -5.80 M6.90 -0.55 L6.62 -0.28 L6.90 0.00 L7.18 -0.28 L6.90 -0.55 M10.76 -5.80 L9.94 -5.52 L9.38 -4.69 L9.11 -3.31 L9.11 -2.48 L9.38 -1.10 L9.94 -0.28 L10.76 0.00 L11.32 0.00 L12.14 -0.28 L12.70 -1.10 L12.97 -2.48 L12.97 -3.31 L12.70 -4.69 L12.14 -5.52 L11.32 -5.80 L10.76 -5.80 M15.18 -5.80 L18.22 -5.80 L16.56 -3.59 L17.39 -3.59 L17.94 -3.31 L18.22 -3.04 L18.49 -2.21 L18.49 -1.66 L18.22 -0.83 L17.66 -0.28 L16.84 0.00 L16.01 0.00 L15.18 -0.28 L14.90 -0.55 L14.63 -1.10" fill="none" stroke="#f0f0f0" stroke-width="1.0" stroke-linecap="round" stroke-linejoin="round" shape-rendering="crispEdges"/>
<path transform="translate(586.60 405.25) rotate(-90) translate(-13.80 0)" d="M1.38 -5.80 L4.42 -5.80 L2.76 -3.59 L3.59 -3.59 L4.14 -3.31 L4.42 -3.04 L4.69 -2.21 L4.69 -1.66 L4.42 -0.83 L3.86 -0.28 L3.04 0.00 L2.21 0.00 L1.38 -0.28 L1.10 -0.55 L0.83 -1.10 M9.11 -5.80 L6.35 -1.93 L10.49 -1.93 M9.11 -5.80 L9.11 0.00 M14.63 -5.80 L11.87 -1.93 L16.01 -1.93 M14.63 -5.80 L14.63 0.00 M19.04 -5.80 L18.22 -5.52 L17.66 -4.69 L17.39 -3.31 L17.39 -2.48 L17.66 -1.10 L18.22 -0.28 L19.04 0.00 L19.60 0.00 L20.42 -0.28 L20.98 -1.10 L21.25 -2.48 L21.25 -3.31 L20.98 -4.69 L20.42 -5.52 L19.60 -5.80 L19.04 -5.80 M24.56 -5.80 L23.74 -5.52 L23.18 -4.69 L22.91 -3.31 L22.91 -2.48 L23.18 -1.10 L23.74 -0.28 L24.56 0.00 L25.12 0.00 L25.94 -0.28 L26.50 -1.10 L26.77 -2.48 L26.77 -3.31 L26.50 -4.69 L25.94 -5.52 L25.12 -5.80 L24.56 -5.80" fill="none" stroke="#f0f0f0" stroke-width="1.0" stroke-linecap="round" stroke-linejoin="round" shape-rendering="crispEdges"/>
<path transform="translate(586.60 347.30) rotate(-90) translate(-13.80 0)" d="M1.38 -5.80 L4.42 -5.80 L2.76 -3.59 L3.59 -3.59 L4.14 -3.31 L4.42 -3.04 L4.69 -2.21 L4.69 -1.66 L4.42 -0.83 L3.86 -0.28 L3.04 0.00 L2.21 0.00 L1.38 -0.28 L1.10 -0.55 L0.83 -1.10 M9.11 -5.80 L6.35 -1.93 L10.49 -1.93 M9.11 -5.80 L9.11 0.00 M15.18 -5.80 L12.42 -5.80 L12.14 -3.31 L12.42 -3.59 L13.25 -3.86 L14.08 -3.86 L14.90 -3.59 L15.46 -3.04 L15.73 -2.21 L15.73 -1.66 L15.46 -0.83 L14.90 -0.28 L14.08 0.00 L13.25 0.00 L12.42 -0.28 L12.14 -0.55 L11.87 -1.10 M19.04 -5.80 L18.22 -5.52 L17.66 -4.69 L17.39 -3.31 L17.39 -2.48 L17.66 -1.10 L18.22 -0.28 L19.04 0.00 L19.60 0.00 L20.42 -0.28 L20.98 -1.10 L21.25 -2.48 L21.25 -3.31 L20.98 -4.69 L20.42 -5.52 L19.60 -5.80 L19.04 -5.80 M24.56 -5.80 L23.74 -5.52 L23.18 -4.69 L22.91 -3.31 L22.91 -2.48 L23.18 -1.10 L23.74 -0.28 L24.56 0.00 L25.12 0.00 L25.94 -0.28 L26.50 -1.10 L26.77 -2.48 L26.77 -3.31 L26.50 -4.69 L25.94 -5.52 L25.12 -5.80 L24.56 -5.80" fill="none" stroke="#f0f0f0" stroke-width="1.0" stroke-linecap="round" stroke-linejoin="round" shape-rendering="crispEdges"/>
<path transform="translate(586.60 289.35) rotate(-90) translate(-13.80 0)" d="M1.38 -5.80 L4.42 -5.80 L2.76 -3.59 L3.59 -3.59 L4.14 -3.31 L4.42 -3.04 L4.69 -2.21 L4.69 -1.66 L4.42 -0.83 L3.86 -0.28 L3.04 0.00 L2.21 0.00 L1.38 -0.28 L1.10 -0.55 L0.83 -1.10 M9.11 -5.80 L6.35 -1.93 L10.49 -1.93 M9.11 -5.80 L9.11 0.00 M15.46 -4.97 L15.18 -5.52 L14.35 -5.80 L13.80 -5.80 L12.97 -5.52 L12.42 -4.69 L12.14 -3.31 L12.14 -1.93 L12.42 -0.83 L12.97 -0.28 L13.80 0.00 L14.08 0.00 L14.90 -0.28 L15.46 -0.83 L15.73 -1.66 L15.73 -1.93 L15.46 -2.76 L14.90 -3.31 L14.08 -3.59 L13.80 -3.59 L12.97 -3.31 L12.42 -2.76 L12.14 -1.93 M19.04 -5.80 L18.22 -5.52 L17.66 -4.69 L17.39 -3.31 L17.39 -2.48 L17.66 -1.10 L18.22 -0.28 L19.04 0.00 L19.60 0.00 L20.42 -0.28 L20.98 -1.10 L21.25 -2.48 L21.25 -3.31 L20.98 -4.69 L20.42 -5.52 L19.60 -5.80 L19.04 -5.80 M24.56 -5.80 L23.74 -5.52 L23.18 -4.69 L22.91 -3.31 L22.91 -2.48 L23.18 -1.10 L23.74 -0.28 L24.56 0.00 L25.12 0.00 L25.94 -0.28 L26.50 -1.10 L26.77 -2.48 L26.77 -3.31 L26.50 -4.69 L25.94 -5.52 L25.12 -5.80 L24.56 -5.80" fill="none" stroke="#f0f0f0" stroke-width="1.0" stroke-linecap="round" stroke-linejoin="round" shape-rendering="crispEdges"/>
<path transform="translate(586.60 231.40) rotate(-90) translate(-13.80 0)" d="M1.38 -5.80 L4.42 -5.80 L2.76 -3.59 L3.59 -3.59 L4.14 -3.31 L4.42 -3.04 L4.69 -2.21 L4.69 -1.66 L4.42 -0.83 L3.86 -0.28 L3.04 0.00 L2.21 0.00 L1.38 -0.28 L1.10 -0.55 L0.83 -1.10 M9.11 -5.80 L6.35 -1.93 L10.49 -1.93 M9.11 -5.80 L9.11 0.00 M15.73 -5.80 L12.97 0.00 M11.87 -5.80 L15.73 -5.80 M19.04 -5.80 L18.22 -5.52 L17.66 -4.69 L17.39 -3.31 L17.39 -2.48 L17.66 -1.10 L18.22 -0.28 L19.04 0.00 L19.60 0.00 L20.42 -0.28 L20.98 -1.10 L21.25 -2.48 L21.25 -3.31 L20.98 -4.69 L20.42 -5.52 L19.60 -5.80 L19.04 -5.80 M24.56 -5.80 L23.74 -5.52 L23.18 -4.69 L22.91 -3.31 L22.91 -2.48 L23.18 -1.10 L23.74 -0.28 L24.56 0.00 L25.12 0.00 L25.94 -0.28 L26.50 -1.10 L26.77 -2.48 L26.77 -3.31 L26.50 -4.69 L25.94 -5.52 L25.12 -5.80 L24.56 -5.80" fill="none" stroke="#f0f0f0" stroke-width="1.0" stroke-linecap="round" stroke-linejoin="round" shape-rendering="crispEdges"/>
<path transform="translate(586.60 173.45) rotate(-90) translate(-13.80 0)" d="M1.38 -5.80 L4.42 -5.80 L2.76 -3.59 L3.59 -3.59 L4.14 -3.31 L4.42 -3.04 L4.69 -2.21 L4.69 -1.66 L4.42 -0.83 L3.86 -0.28 L3.04 0.00 L2.21 0.00 L1.38 -0.28 L1.10 -0.55 L0.83 -1.10 M9.11 -5.80 L6.35 -1.93 L10.49 -1.93 M9.11 -5.80 L9.11 0.00 M13.25 -5.80 L12.42 -5.52 L12.14 -4.97 L12.14 -4.42 L12.42 -3.86 L12.97 -3.59 L14.08 -3.31 L14.90 -3.04 L15.46 -2.48 L15.73 -1.93 L15.73 -1.10 L15.46 -0.55 L15.18 -0.28 L14.35 0.00 L13.25 0.00 L12.42 -0.28 L12.14 -0.55 L11.87 -1.10 L11.87 -1.93 L12.14 -2.48 L12.70 -3.04 L13.52 -3.31 L14.63 -3.59 L15.18 -3.86 L15.46 -4.42 L15.46 -4.97 L15.18 -5.52 L14.35 -5.80 L13.25 -5.80 M19.04 -5.80 L18.22 -5.52 L17.66 -4.69 L17.39 -3.31 L17.39 -2.48 L17.66 -1.10 L18.22 -0.28 L19.04 0.00 L19.60 0.00 L20.42 -0.28 L20.98 -1.10 L21.25 -2.48 L21.25 -3.31 L20.98 -4.69 L20.42 -5.52 L19.60 -5.80 L19.04 -5.80 M24.56 -5.80 L23.74 -5.52 L23.18 -4.69 L22.91 -3.31 L22.91 -2.48 L23.18 -1.10 L23.74 -0.28 L24.56 0.00 L25.12 0.00 L25.94 -0.28 L26.50 -1.10 L26.77 -2.48 L26.77 -3.31 L26.50 -4.69 L25.94 -5.52 L25.12 -5.80 L24.56 -5.80" fill="none" stroke="#f0f0f0" stroke-width="1.0" stroke-linecap="round" stroke-linejoin="round" shape-rendering="crispEdges"/>
<path transform="translate(586.60 115.50) rotate(-90) translate(-13.80 0)" d="M1.38 -5.80 L4.42 -5.80 L2.76 -3.59 L3.59 -3.59 L4.14 -3.31 L4.42 -3.04 L4.69 -2.21 L4.69 -1.66 L4.42 -0.83 L3.86 -0.28 L3.04 0.00 L2.21 0.00 L1.38 -0.28 L1.10 -0.55 L0.83 -1.10 M9.11 -5.80 L6.35 -1.93 L10.49 -1.93 M9.11 -5.80 L9.11 0.00 M15.46 -3.86 L15.18 -3.04 L14.63 -2.48 L13.80 -2.21 L13.52 -2.21 L12.70 -2.48 L12.14 -3.04 L11.87 -3.86 L11.87 -4.14 L12.14 -4.97 L12.70 -5.52 L13.52 -5.80 L13.80 -5.80 L14.63 -5.52 L15.18 -4.97 L15.46 -3.86 L15.46 -2.48 L15.18 -1.10 L14.63 -0.28 L13.80 0.00 L13.25 0.00 L12.42 -0.28 L12.14 -0.83 M19.04 -5.80 L18.22 -5.52 L17.66 -4.69 L17.39 -3.31 L17.39 -2.48 L17.66 -1.10 L18.22 -0.28 L19.04 0.00 L19.60 0.00 L20.42 -0.28 L20.98 -1.10 L21.25 -2.48 L21.25 -3.31 L20.98 -4.69 L20.42 -5.52 L19.60 -5.80 L19.04 -5.80 M24.56 -5.80 L23.74 -5.52 L23.18 -4.69 L22.91 -3.31 L22.91 -2.48 L23.18 -1.10 L23.74 -0.28 L24.56 0.00 L25.12 0.00 L25.94 -0.28 L26.50 -1.10 L26.77 -2.48 L26.77 -3.31 L26.50 -4.69 L25.94 -5.52 L25.12 -5.80 L24.56 -5.80" fill="none" stroke="#f0f0f0" stroke-width="1.0" stroke-linecap="round" stroke-linejoin="round" shape-rendering="crispEdges"/>
<path d="M87.5 62v2 M97.5 62v2 M106.5 62v2 M116.5 62v2 M126.5 62v4 M136.5 62v2 M146.5 62v2 M155.5 62v2 M165.5 62v2 M175.5 62v4 M185.5 62v2 M194.5 62v2 M204.5 62v2 M214.5 62v2 M224.5 62v4 M233.5 62v2 M243.5 62v2 M253.5 62v2 M263.5 62v2 M272.5 62v4 M282.5 62v2 M292.5 62v2 M302.5 62v2 M311.5 62v2 M321.5 62v4 M331.5 62v2 M341.5 62v2 M350.5 62v2 M360.5 62v2 M370.5 62v4 M380.5 62v2 M389.5 62v2 M399.5 62v2 M409.5 62v2 M419.5 62v4 M428.5 62v2 M438.5 62v2 M448.5 62v2 M458.5 62v2 M467.5 62v4 M477.5 62v2 M487.5 62v2 M497.5 62v2 M506.5 62v2 M516.5 62v4 M526.5 62v2 M536.5 62v2 M545.5 62v2 M555.5 62v2 M565.5 62v4 M90.5 439v-2 M104.5 439v-2 M119.5 439v-4 M134.5 439v-2 M148.5 439v-2 M163.5 439v-2 M178.5 439v-2 M192.5 439v-2 M207.5 439v-4 M222.5 439v-2 M236.5 439v-2 M251.5 439v-2 M266.5 439v-2 M280.5 439v-2 M295.5 439v-4 M310.5 439v-2 M324.5 439v-2 M339.5 439v-2 M354.5 439v-2 M368.5 439v-2 M383.5 439v-4 M398.5 439v-2 M412.5 439v-2 M427.5 439v-2 M441.5 439v-2 M456.5 439v-2 M471.5 439v-4 M485.5 439v-2 M500.5 439v-2 M515.5 439v-2 M529.5 439v-2 M544.5 439v-2 M559.5 439v-4 M573.5 439v-2 M78 428.5h4 M78 417.5h2 M78 405.5h2 M78 394.5h2 M78 382.5h2 M78 370.5h4 M78 359.5h2 M78 347.5h2 M78 336.5h2 M78 324.5h2 M78 313.5h4 M78 301.5h2 M78 289.5h2 M78 278.5h2 M78 266.5h2 M78 255.5h4 M78 243.5h2 M78 231.5h2 M78 220.5h2 M78 208.5h2 M78 197.5h4 M78 185.5h2 M78 174.5h2 M78 162.5h2 M78 150.5h2 M78 139.5h4 M78 127.5h2 M78 116.5h2 M78 104.5h2 M78 92.5h2 M78 81.5h4 M78 69.5h2 M576 428.5h-2 M576 416.5h-2 M576 405.5h-4 M576 393.5h-2 M576 382.5h-2 M576 370.5h-2 M576 358.5h-2 M576 347.5h-4 M576 335.5h-2 M576 324.5h-2 M576 312.5h-2 M576 300.5h-2 M576 289.5h-4 M576 277.5h-2 M576 266.5h-2 M576 254.5h-2 M576 242.5h-2 M576 231.5h-4 M576 219.5h-2 M576 208.5h-2 M576 196.5h-2 M576 185.5h-2 M576 173.5h-4 M576 161.5h-2 M576 150.5h-2 M576 138.5h-2 M576 127.5h-2 M576 115.5h-4 M576 103.5h-2 M576 92.5h-2 M576 80.5h-2 M576 69.5h-2" stroke="#f2f2f2" stroke-width="1" fill="none"/>
<path transform="translate(326.50 467.70) translate(-49.96 0)" d="M1.10 -5.80 L1.10 -1.66 L1.38 -0.83 L1.93 -0.28 L2.76 0.00 L3.31 0.00 L4.14 -0.28 L4.69 -0.83 L4.97 -1.66 L4.97 -5.80 M8.28 -5.80 L8.28 0.00 M6.35 -5.80 L10.21 -5.80 M16.01 -5.80 L16.01 0.00 M16.01 -5.80 L17.94 -5.80 L18.77 -5.52 L19.32 -4.97 L19.60 -4.42 L19.87 -3.59 L19.87 -2.21 L19.60 -1.38 L19.32 -0.83 L18.77 -0.28 L17.94 0.00 L16.01 0.00 M24.84 -3.86 L24.84 0.00 M24.84 -3.04 L24.29 -3.59 L23.74 -3.86 L22.91 -3.86 L22.36 -3.59 L21.80 -3.04 L21.53 -2.21 L21.53 -1.66 L21.80 -0.83 L22.36 -0.28 L22.91 0.00 L23.74 0.00 L24.29 -0.28 L24.84 -0.83 M27.32 -5.80 L27.32 -1.10 L27.60 -0.28 L28.15 0.00 L28.70 0.00 M26.50 -3.86 L28.43 -3.86 M30.08 -2.21 L33.40 -2.21 L33.40 -2.76 L33.12 -3.31 L32.84 -3.59 L32.29 -3.86 L31.46 -3.86 L30.91 -3.59 L30.36 -3.04 L30.08 -2.21 L30.08 -1.66 L30.36 -0.83 L30.91 -0.28 L31.46 0.00 L32.29 0.00 L32.84 -0.28 L33.40 -0.83 M35.60 -3.86 L35.33 -3.59 L35.60 -3.31 L35.88 -3.59 L35.60 -3.86 M35.60 -0.55 L35.33 -0.28 L35.60 0.00 L35.88 -0.28 L35.60 -0.55 M42.50 -4.42 L42.50 -4.69 L42.78 -5.24 L43.06 -5.52 L43.61 -5.80 L44.71 -5.80 L45.26 -5.52 L45.54 -5.24 L45.82 -4.69 L45.82 -4.14 L45.54 -3.59 L44.99 -2.76 L42.23 0.00 L46.09 0.00 M49.40 -5.80 L48.58 -5.52 L48.02 -4.69 L47.75 -3.31 L47.75 -2.48 L48.02 -1.10 L48.58 -0.28 L49.40 0.00 L49.96 0.00 L50.78 -0.28 L51.34 -1.10 L51.61 -2.48 L51.61 -3.31 L51.34 -4.69 L50.78 -5.52 L49.96 -5.80 L49.40 -5.80 M53.54 -4.42 L53.54 -4.69 L53.82 -5.24 L54.10 -5.52 L54.65 -5.80 L55.75 -5.80 L56.30 -5.52 L56.58 -5.24 L56.86 -4.69 L56.86 -4.14 L56.58 -3.59 L56.03 -2.76 L53.27 0.00 L57.13 0.00 M62.38 -4.97 L62.10 -5.52 L61.27 -5.80 L60.72 -5.80 L59.89 -5.52 L59.34 -4.69 L59.06 -3.31 L59.06 -1.93 L59.34 -0.83 L59.89 -0.28 L60.72 0.00 L61.00 0.00 L61.82 -0.28 L62.38 -0.83 L62.65 -1.66 L62.65 -1.93 L62.38 -2.76 L61.82 -3.31 L61.00 -3.59 L60.72 -3.59 L59.89 -3.31 L59.34 -2.76 L59.06 -1.93 M64.58 -2.48 L69.55 -2.48 M73.14 -5.80 L72.31 -5.52 L71.76 -4.69 L71.48 -3.31 L71.48 -2.48 L71.76 -1.10 L72.31 -0.28 L73.14 0.00 L73.69 0.00 L74.52 -0.28 L75.07 -1.10 L75.35 -2.48 L75.35 -3.31 L75.07 -4.69 L74.52 -5.52 L73.69 -5.80 L73.14 -5.80 M79.76 -5.80 L77.00 -1.93 L81.14 -1.93 M79.76 -5.80 L79.76 0.00 M82.80 -2.48 L87.77 -2.48 M91.36 -5.80 L90.53 -5.52 L89.98 -4.69 L89.70 -3.31 L89.70 -2.48 L89.98 -1.10 L90.53 -0.28 L91.36 0.00 L91.91 0.00 L92.74 -0.28 L93.29 -1.10 L93.56 -2.48 L93.56 -3.31 L93.29 -4.69 L92.74 -5.52 L91.91 -5.80 L91.36 -5.80 M95.50 -4.42 L95.50 -4.69 L95.77 -5.24 L96.05 -5.52 L96.60 -5.80 L97.70 -5.80 L98.26 -5.52 L98.53 -5.24 L98.81 -4.69 L98.81 -4.14 L98.53 -3.59 L97.98 -2.76 L95.22 0.00 L99.08 0.00" fill="none" stroke="#f0f0f0" stroke-width="1.0" stroke-linecap="round" stroke-linejoin="round" shape-rendering="crispEdges"/>
<path transform="translate(58.00 249.50) rotate(-90) translate(-61.41 0)" d="M1.10 -5.80 L1.10 0.00 M1.10 -5.80 L4.69 -5.80 M1.10 -3.04 L3.31 -3.04 M6.07 -3.86 L6.07 0.00 M6.07 -2.21 L6.35 -3.04 L6.90 -3.59 L7.45 -3.86 L8.28 -3.86 M9.38 -2.21 L12.70 -2.21 L12.70 -2.76 L12.42 -3.31 L12.14 -3.59 L11.59 -3.86 L10.76 -3.86 L10.21 -3.59 L9.66 -3.04 L9.38 -2.21 L9.38 -1.66 L9.66 -0.83 L10.21 -0.28 L10.76 0.00 L11.59 0.00 L12.14 -0.28 L12.70 -0.83 M17.66 -3.86 L17.66 1.93 M17.66 -3.04 L17.11 -3.59 L16.56 -3.86 L15.73 -3.86 L15.18 -3.59 L14.63 -3.04 L14.35 -2.21 L14.35 -1.66 L14.63 -0.83 L15.18 -0.28 L15.73 0.00 L16.56 0.00 L17.11 -0.28 L17.66 -0.83 M19.87 -3.86 L19.87 -1.10 L20.15 -0.28 L20.70 0.00 L21.53 0.00 L22.08 -0.28 L22.91 -1.10 M22.91 -3.86 L22.91 0.00 M24.84 -2.21 L28.15 -2.21 L28.15 -2.76 L27.88 -3.31 L27.60 -3.59 L27.05 -3.86 L26.22 -3.86 L25.67 -3.59 L25.12 -3.04 L24.84 -2.21 L24.84 -1.66 L25.12 -0.83 L25.67 -0.28 L26.22 0.00 L27.05 0.00 L27.60 -0.28 L28.15 -0.83 M30.08 -3.86 L30.08 0.00 M30.08 -2.76 L30.91 -3.59 L31.46 -3.86 L32.29 -3.86 L32.84 -3.59 L33.12 -2.76 L33.12 0.00 M38.36 -3.04 L37.81 -3.59 L37.26 -3.86 L36.43 -3.86 L35.88 -3.59 L35.33 -3.04 L35.05 -2.21 L35.05 -1.66 L35.33 -0.83 L35.88 -0.28 L36.43 0.00 L37.26 0.00 L37.81 -0.28 L38.36 -0.83 M39.74 -3.86 L41.40 0.00 M43.06 -3.86 L41.40 0.00 L40.85 1.10 L40.30 1.66 L39.74 1.93 L39.47 1.93 M49.13 -2.48 L54.10 -2.48 M60.72 -4.42 L60.72 -4.69 L61.00 -5.24 L61.27 -5.52 L61.82 -5.80 L62.93 -5.80 L63.48 -5.52 L63.76 -5.24 L64.03 -4.69 L64.03 -4.14 L63.76 -3.59 L63.20 -2.76 L60.44 0.00 L64.31 0.00 M66.24 -4.42 L66.24 -4.69 L66.52 -5.24 L66.79 -5.52 L67.34 -5.80 L68.45 -5.80 L69.00 -5.52 L69.28 -5.24 L69.55 -4.69 L69.55 -4.14 L69.28 -3.59 L68.72 -2.76 L65.96 0.00 L69.83 0.00 M72.31 -4.69 L72.86 -4.97 L73.69 -5.80 L73.69 0.00 M80.59 -4.97 L80.32 -5.52 L79.49 -5.80 L78.94 -5.80 L78.11 -5.52 L77.56 -4.69 L77.28 -3.31 L77.28 -1.93 L77.56 -0.83 L78.11 -0.28 L78.94 0.00 L79.21 0.00 L80.04 -0.28 L80.59 -0.83 L80.87 -1.66 L80.87 -1.93 L80.59 -2.76 L80.04 -3.31 L79.21 -3.59 L78.94 -3.59 L78.11 -3.31 L77.56 -2.76 L77.28 -1.93 M83.08 -0.55 L82.80 -0.28 L83.08 0.00 L83.35 -0.28 L83.08 -0.55 M88.04 -5.80 L85.28 -1.93 L89.42 -1.93 M88.04 -5.80 L88.04 0.00 M94.39 -4.97 L94.12 -5.52 L93.29 -5.80 L92.74 -5.80 L91.91 -5.52 L91.36 -4.69 L91.08 -3.31 L91.08 -1.93 L91.36 -0.83 L91.91 -0.28 L92.74 0.00 L93.01 0.00 L93.84 -0.28 L94.39 -0.83 L94.67 -1.66 L94.67 -1.93 L94.39 -2.76 L93.84 -3.31 L93.01 -3.59 L92.74 -3.59 L91.91 -3.31 L91.36 -2.76 L91.08 -1.93 M99.91 -4.97 L99.64 -5.52 L98.81 -5.80 L98.26 -5.80 L97.43 -5.52 L96.88 -4.69 L96.60 -3.31 L96.60 -1.93 L96.88 -0.83 L97.43 -0.28 L98.26 0.00 L98.53 0.00 L99.36 -0.28 L99.91 -0.83 L100.19 -1.66 L100.19 -1.93 L99.91 -2.76 L99.36 -3.31 L98.53 -3.59 L98.26 -3.59 L97.43 -3.31 L96.88 -2.76 L96.60 -1.93 M106.54 -5.80 L106.54 0.00 M106.54 -5.80 L108.74 0.00 M110.95 -5.80 L108.74 0.00 M110.95 -5.80 L110.95 0.00 M113.16 -5.80 L113.16 0.00 M117.02 -5.80 L117.02 0.00 M113.16 -3.04 L117.02 -3.04 M121.99 -3.86 L118.96 0.00 M118.96 -3.86 L121.99 -3.86 M118.96 0.00 L121.99 0.00" fill="none" stroke="#f0f0f0" stroke-width="1.0" stroke-linecap="round" stroke-linejoin="round" shape-rendering="crispEdges"/>
</svg>
</body></html>
